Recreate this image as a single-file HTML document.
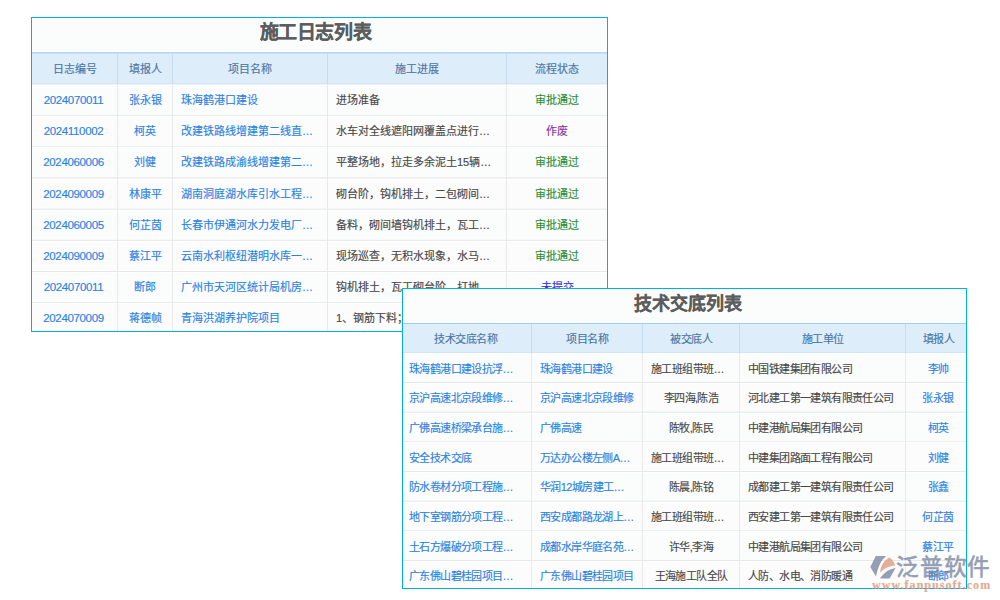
<!DOCTYPE html>
<html lang="zh-CN"><head><meta charset="utf-8"><style>
html,body{margin:0;padding:0;background:#ffffff;width:1000px;height:600px;overflow:hidden;position:relative}
body{font-family:"Liberation Sans",sans-serif}
.b{position:absolute}
.t{position:absolute;white-space:nowrap;box-sizing:border-box;text-align:center;-webkit-text-stroke:0.15px currentColor}
</style></head><body>
<div style="position:absolute;left:0;top:0;width:1000px;height:600px;z-index:1"><div class="b" style="left:31px;top:17px;width:577px;height:315px;background:#00aeef"></div><div class="b" style="left:32px;top:18px;width:575px;height:313px;background:#fbfcfc"></div><div class="t" style="left:28px;top:16.2px;width:575px;height:33px;line-height:33px;color:#5c5c5c;font-size:19px;font-weight:bold;letter-spacing:-0.4px;-webkit-text-stroke:0.15px #5c5c5c;">施工日志列表</div><div class="b" style="left:32px;top:51px;width:575px;height:1px;background:#ffffff"></div><div class="b" style="left:32px;top:52px;width:575px;height:1px;background:#b6d7f1"></div><div class="b" style="left:32px;top:53px;width:575px;height:1px;background:#c4e0f5"></div><div class="b" style="left:32px;top:54px;width:575px;height:29px;background:#deedfa"></div><div class="b" style="left:32px;top:83px;width:575px;height:1px;background:#d3e5f4"></div><div class="b" style="left:32px;top:84px;width:575px;height:1px;background:#eef3f6"></div><div class="b" style="left:32px;top:85px;width:575px;height:1px;background:rgba(255,255,255,0.8)"></div><div class="b" style="left:32px;top:116px;width:575px;height:30px;background:#fcfcfc"></div><div class="b" style="left:32px;top:115px;width:575px;height:1px;background:rgba(200,200,200,0.332)"></div><div class="b" style="left:32px;top:116px;width:575px;height:1px;background:rgba(200,200,200,0.068)"></div><div class="b" style="left:32px;top:116px;width:575px;height:1px;background:rgba(255,255,255,0.8)"></div><div class="b" style="left:32px;top:146px;width:575px;height:1px;background:rgba(200,200,200,0.264)"></div><div class="b" style="left:32px;top:147px;width:575px;height:1px;background:rgba(200,200,200,0.136)"></div><div class="b" style="left:32px;top:147px;width:575px;height:1px;background:rgba(255,255,255,0.8)"></div><div class="b" style="left:32px;top:178px;width:575px;height:30px;background:#fcfcfc"></div><div class="b" style="left:32px;top:177px;width:575px;height:1px;background:rgba(200,200,200,0.196)"></div><div class="b" style="left:32px;top:178px;width:575px;height:1px;background:rgba(200,200,200,0.204)"></div><div class="b" style="left:32px;top:179px;width:575px;height:1px;background:rgba(255,255,255,0.8)"></div><div class="b" style="left:32px;top:208px;width:575px;height:1px;background:rgba(200,200,200,0.128)"></div><div class="b" style="left:32px;top:209px;width:575px;height:1px;background:rgba(200,200,200,0.272)"></div><div class="b" style="left:32px;top:210px;width:575px;height:1px;background:rgba(255,255,255,0.8)"></div><div class="b" style="left:32px;top:240px;width:575px;height:31px;background:#fcfcfc"></div><div class="b" style="left:32px;top:239px;width:575px;height:1px;background:rgba(200,200,200,0.060)"></div><div class="b" style="left:32px;top:240px;width:575px;height:1px;background:rgba(200,200,200,0.340)"></div><div class="b" style="left:32px;top:241px;width:575px;height:1px;background:rgba(255,255,255,0.8)"></div><div class="b" style="left:32px;top:271px;width:575px;height:1px;background:rgba(200,200,200,0.392)"></div><div class="b" style="left:32px;top:272px;width:575px;height:1px;background:rgba(255,255,255,0.8)"></div><div class="b" style="left:32px;top:303px;width:575px;height:28px;background:#fcfcfc"></div><div class="b" style="left:32px;top:302px;width:575px;height:1px;background:rgba(200,200,200,0.324)"></div><div class="b" style="left:32px;top:303px;width:575px;height:1px;background:rgba(200,200,200,0.076)"></div><div class="b" style="left:32px;top:303px;width:575px;height:1px;background:rgba(255,255,255,0.8)"></div><div class="b" style="left:117px;top:54px;width:1px;height:30px;background:#c8dcef"></div><div class="b" style="left:117px;top:84px;width:1px;height:247px;background:#e9e9e9"></div><div class="b" style="left:172px;top:54px;width:1px;height:30px;background:#c8dcef"></div><div class="b" style="left:172px;top:84px;width:1px;height:247px;background:#e9e9e9"></div><div class="b" style="left:327px;top:54px;width:1px;height:30px;background:#c8dcef"></div><div class="b" style="left:327px;top:84px;width:1px;height:247px;background:#e9e9e9"></div><div class="b" style="left:506px;top:54px;width:1px;height:30px;background:#c8dcef"></div><div class="b" style="left:506px;top:84px;width:1px;height:247px;background:#e9e9e9"></div><div class="t" style="left:32px;top:54.5px;width:85px;height:29px;line-height:29px;color:#4a76a6;font-size:11px;">日志编号</div><div class="t" style="left:118px;top:54.5px;width:54px;height:29px;line-height:29px;color:#4a76a6;font-size:11px;">填报人</div><div class="t" style="left:173px;top:54.5px;width:154px;height:29px;line-height:29px;color:#4a76a6;font-size:11px;">项目名称</div><div class="t" style="left:328px;top:54.5px;width:178px;height:29px;line-height:29px;color:#4a76a6;font-size:11px;">施工进展</div><div class="t" style="left:507px;top:54.5px;width:100px;height:29px;line-height:29px;color:#4a76a6;font-size:11px;">流程状态</div><div class="t" style="left:31px;top:85.0px;width:85px;height:31.17px;line-height:31.17px;color:#2a82e4;font-size:11.5px;letter-spacing:-0.35px;">2024070011</div><div class="t" style="left:118px;top:85.0px;width:54px;height:31.17px;line-height:31.17px;color:#2a82e4;font-size:11px;">张永银</div><div class="t" style="left:173px;top:85.0px;width:154px;height:31.17px;line-height:31.17px;color:#2a82e4;font-size:11px;text-align:left;padding-left:8px;">珠海鹤港口建设</div><div class="t" style="left:328px;top:85.0px;width:178px;height:31.17px;line-height:31.17px;color:#484848;font-size:11px;text-align:left;padding-left:8px;">进场准备</div><div class="t" style="left:507px;top:85.0px;width:100px;height:31.17px;line-height:31.17px;color:#2b8c30;font-size:11px;">审批通过</div><div class="t" style="left:31px;top:116.17px;width:85px;height:31.17px;line-height:31.17px;color:#2a82e4;font-size:11.5px;letter-spacing:-0.35px;">2024110002</div><div class="t" style="left:118px;top:116.17px;width:54px;height:31.17px;line-height:31.17px;color:#2a82e4;font-size:11px;">柯英</div><div class="t" style="left:173px;top:116.17px;width:154px;height:31.17px;line-height:31.17px;color:#2a82e4;font-size:11px;text-align:left;padding-left:8px;">改建铁路线增建第二线直…</div><div class="t" style="left:328px;top:116.17px;width:178px;height:31.17px;line-height:31.17px;color:#484848;font-size:11px;text-align:left;padding-left:8px;">水车对全线遮阳网覆盖点进行…</div><div class="t" style="left:507px;top:116.17px;width:100px;height:31.17px;line-height:31.17px;color:#8434a4;font-size:11px;">作废</div><div class="t" style="left:31px;top:147.34px;width:85px;height:31.17px;line-height:31.17px;color:#2a82e4;font-size:11.5px;letter-spacing:-0.35px;">2024060006</div><div class="t" style="left:118px;top:147.34px;width:54px;height:31.17px;line-height:31.17px;color:#2a82e4;font-size:11px;">刘健</div><div class="t" style="left:173px;top:147.34px;width:154px;height:31.17px;line-height:31.17px;color:#2a82e4;font-size:11px;text-align:left;padding-left:8px;">改建铁路成渝线增建第二…</div><div class="t" style="left:328px;top:147.34px;width:178px;height:31.17px;line-height:31.17px;color:#484848;font-size:11px;text-align:left;padding-left:8px;">平整场地，拉走多余泥土15辆…</div><div class="t" style="left:507px;top:147.34px;width:100px;height:31.17px;line-height:31.17px;color:#2b8c30;font-size:11px;">审批通过</div><div class="t" style="left:31px;top:178.51px;width:85px;height:31.17px;line-height:31.17px;color:#2a82e4;font-size:11.5px;letter-spacing:-0.35px;">2024090009</div><div class="t" style="left:118px;top:178.51px;width:54px;height:31.17px;line-height:31.17px;color:#2a82e4;font-size:11px;">林康平</div><div class="t" style="left:173px;top:178.51px;width:154px;height:31.17px;line-height:31.17px;color:#2a82e4;font-size:11px;text-align:left;padding-left:8px;">湖南洞庭湖水库引水工程…</div><div class="t" style="left:328px;top:178.51px;width:178px;height:31.17px;line-height:31.17px;color:#484848;font-size:11px;text-align:left;padding-left:8px;">砌台阶，钩机排土，二包砌间…</div><div class="t" style="left:507px;top:178.51px;width:100px;height:31.17px;line-height:31.17px;color:#2b8c30;font-size:11px;">审批通过</div><div class="t" style="left:31px;top:209.68px;width:85px;height:31.17px;line-height:31.17px;color:#2a82e4;font-size:11.5px;letter-spacing:-0.35px;">2024060005</div><div class="t" style="left:118px;top:209.68px;width:54px;height:31.17px;line-height:31.17px;color:#2a82e4;font-size:11px;">何芷茵</div><div class="t" style="left:173px;top:209.68px;width:154px;height:31.17px;line-height:31.17px;color:#2a82e4;font-size:11px;text-align:left;padding-left:8px;">长春市伊通河水力发电厂…</div><div class="t" style="left:328px;top:209.68px;width:178px;height:31.17px;line-height:31.17px;color:#484848;font-size:11px;text-align:left;padding-left:8px;">备料，砌间墙钩机排土，瓦工…</div><div class="t" style="left:507px;top:209.68px;width:100px;height:31.17px;line-height:31.17px;color:#2b8c30;font-size:11px;">审批通过</div><div class="t" style="left:31px;top:240.85px;width:85px;height:31.17px;line-height:31.17px;color:#2a82e4;font-size:11.5px;letter-spacing:-0.35px;">2024090009</div><div class="t" style="left:118px;top:240.85px;width:54px;height:31.17px;line-height:31.17px;color:#2a82e4;font-size:11px;">蔡江平</div><div class="t" style="left:173px;top:240.85px;width:154px;height:31.17px;line-height:31.17px;color:#2a82e4;font-size:11px;text-align:left;padding-left:8px;">云南水利枢纽潜明水库一…</div><div class="t" style="left:328px;top:240.85px;width:178px;height:31.17px;line-height:31.17px;color:#484848;font-size:11px;text-align:left;padding-left:8px;">现场巡查，无积水现象，水马…</div><div class="t" style="left:507px;top:240.85px;width:100px;height:31.17px;line-height:31.17px;color:#2b8c30;font-size:11px;">审批通过</div><div class="t" style="left:31px;top:272.02px;width:85px;height:31.17px;line-height:31.17px;color:#2a82e4;font-size:11.5px;letter-spacing:-0.35px;">2024070011</div><div class="t" style="left:118px;top:272.02px;width:54px;height:31.17px;line-height:31.17px;color:#2a82e4;font-size:11px;">断郎</div><div class="t" style="left:173px;top:272.02px;width:154px;height:31.17px;line-height:31.17px;color:#2a82e4;font-size:11px;text-align:left;padding-left:8px;">广州市天河区统计局机房…</div><div class="t" style="left:328px;top:272.02px;width:178px;height:31.17px;line-height:31.17px;color:#484848;font-size:11px;text-align:left;padding-left:8px;">钩机排土，瓦工砌台阶，打地…</div><div class="t" style="left:507px;top:272.02px;width:100px;height:31.17px;line-height:31.17px;color:#2e2ee8;font-size:11px;">未提交</div><div class="t" style="left:31px;top:303.19px;width:85px;height:31.17px;line-height:31.17px;color:#2a82e4;font-size:11.5px;letter-spacing:-0.35px;">2024070009</div><div class="t" style="left:118px;top:303.19px;width:54px;height:31.17px;line-height:31.17px;color:#2a82e4;font-size:11px;">蒋德帧</div><div class="t" style="left:173px;top:303.19px;width:154px;height:31.17px;line-height:31.17px;color:#2a82e4;font-size:11px;text-align:left;padding-left:8px;">青海洪湖养护院项目</div><div class="t" style="left:328px;top:303.19px;width:178px;height:31.17px;line-height:31.17px;color:#484848;font-size:11px;text-align:left;padding-left:8px;">1、钢筋下料；…</div></div><div style="position:absolute;left:0;top:0;width:1000px;height:600px;z-index:2"><div class="b" style="left:402px;top:288px;width:565px;height:301px;background:#00aeef"></div><div class="b" style="left:403px;top:289px;width:563px;height:299px;background:#fbfcfc"></div><div class="t" style="left:406px;top:288.3px;width:563px;height:33px;line-height:33px;color:#5c5c5c;font-size:18px;font-weight:bold;-webkit-text-stroke:0.15px #5c5c5c;">技术交底列表</div><div class="b" style="left:403px;top:322px;width:563px;height:1px;background:#ffffff"></div><div class="b" style="left:403px;top:323px;width:563px;height:1px;background:#a3cdee"></div><div class="b" style="left:403px;top:324px;width:563px;height:28px;background:#deedfa"></div><div class="b" style="left:403px;top:352px;width:563px;height:1px;background:#d3e5f4"></div><div class="b" style="left:403px;top:353px;width:563px;height:1px;background:#eef3f6"></div><div class="b" style="left:403px;top:353px;width:563px;height:1px;background:rgba(255,255,255,0.8)"></div><div class="b" style="left:403px;top:383px;width:563px;height:28px;background:#fcfcfc"></div><div class="b" style="left:403px;top:382px;width:563px;height:1px;background:rgba(200,200,200,0.400)"></div><div class="b" style="left:403px;top:383px;width:563px;height:1px;background:rgba(255,255,255,0.8)"></div><div class="b" style="left:403px;top:411px;width:563px;height:1px;background:rgba(200,200,200,0.132)"></div><div class="b" style="left:403px;top:412px;width:563px;height:1px;background:rgba(200,200,200,0.268)"></div><div class="b" style="left:403px;top:413px;width:563px;height:1px;background:rgba(255,255,255,0.8)"></div><div class="b" style="left:403px;top:442px;width:563px;height:29px;background:#fcfcfc"></div><div class="b" style="left:403px;top:441px;width:563px;height:1px;background:rgba(200,200,200,0.264)"></div><div class="b" style="left:403px;top:442px;width:563px;height:1px;background:rgba(200,200,200,0.136)"></div><div class="b" style="left:403px;top:442px;width:563px;height:1px;background:rgba(255,255,255,0.8)"></div><div class="b" style="left:403px;top:471px;width:563px;height:1px;background:rgba(200,200,200,0.396)"></div><div class="b" style="left:403px;top:472px;width:563px;height:1px;background:rgba(255,255,255,0.8)"></div><div class="b" style="left:403px;top:501px;width:563px;height:29px;background:#fcfcfc"></div><div class="b" style="left:403px;top:500px;width:563px;height:1px;background:rgba(200,200,200,0.128)"></div><div class="b" style="left:403px;top:501px;width:563px;height:1px;background:rgba(200,200,200,0.272)"></div><div class="b" style="left:403px;top:502px;width:563px;height:1px;background:rgba(255,255,255,0.8)"></div><div class="b" style="left:403px;top:530px;width:563px;height:1px;background:rgba(200,200,200,0.260)"></div><div class="b" style="left:403px;top:531px;width:563px;height:1px;background:rgba(200,200,200,0.140)"></div><div class="b" style="left:403px;top:531px;width:563px;height:1px;background:rgba(255,255,255,0.8)"></div><div class="b" style="left:403px;top:561px;width:563px;height:27px;background:#fcfcfc"></div><div class="b" style="left:403px;top:560px;width:563px;height:1px;background:rgba(200,200,200,0.392)"></div><div class="b" style="left:403px;top:561px;width:563px;height:1px;background:rgba(255,255,255,0.8)"></div><div class="b" style="left:531px;top:324px;width:1px;height:29px;background:#c8dcef"></div><div class="b" style="left:531px;top:353px;width:1px;height:235px;background:#e9e9e9"></div><div class="b" style="left:642px;top:324px;width:1px;height:29px;background:#c8dcef"></div><div class="b" style="left:642px;top:353px;width:1px;height:235px;background:#e9e9e9"></div><div class="b" style="left:739px;top:324px;width:1px;height:29px;background:#c8dcef"></div><div class="b" style="left:739px;top:353px;width:1px;height:235px;background:#e9e9e9"></div><div class="b" style="left:905px;top:324px;width:1px;height:29px;background:#c8dcef"></div><div class="b" style="left:905px;top:353px;width:1px;height:235px;background:#e9e9e9"></div><div class="t" style="left:401.5px;top:325px;width:128px;height:28px;line-height:28px;color:#4a76a6;font-size:11px;letter-spacing:-0.5px;">技术交底名称</div><div class="t" style="left:532px;top:325px;width:110px;height:28px;line-height:28px;color:#4a76a6;font-size:11px;letter-spacing:-0.5px;">项目名称</div><div class="t" style="left:643px;top:325px;width:96px;height:28px;line-height:28px;color:#4a76a6;font-size:11px;letter-spacing:-0.5px;">被交底人</div><div class="t" style="left:740px;top:325px;width:165px;height:28px;line-height:28px;color:#4a76a6;font-size:11px;letter-spacing:-0.5px;">施工单位</div><div class="t" style="left:908.5px;top:325px;width:60px;height:28px;line-height:28px;color:#4a76a6;font-size:11px;letter-spacing:-0.5px;">填报人</div><div class="t" style="left:403px;top:354.53px;width:128px;height:29.67px;line-height:29.67px;color:#2a82e4;font-size:11px;text-align:left;padding-left:6px;letter-spacing:-0.6px;">珠海鹤港口建设抗浮…</div><div class="t" style="left:532px;top:354.53px;width:110px;height:29.67px;line-height:29.67px;color:#2a82e4;font-size:11px;text-align:left;padding-left:8px;letter-spacing:-0.6px;">珠海鹤港口建设</div><div class="t" style="left:643px;top:354.53px;width:96px;height:29.67px;line-height:29.67px;color:#484848;font-size:11px;text-align:left;padding-left:8px;letter-spacing:-0.6px;">施工班组带班…</div><div class="t" style="left:740px;top:354.53px;width:165px;height:29.67px;line-height:29.67px;color:#484848;font-size:11px;text-align:left;padding-left:8px;letter-spacing:-0.6px;">中国铁建集团有限公司</div><div class="t" style="left:908px;top:354.53px;width:60px;height:29.67px;line-height:29.67px;color:#2a82e4;font-size:11px;letter-spacing:-0.6px;">李帅</div><div class="t" style="left:403px;top:384.2px;width:128px;height:29.67px;line-height:29.67px;color:#2a82e4;font-size:11px;text-align:left;padding-left:6px;letter-spacing:-0.6px;">京沪高速北京段维修…</div><div class="t" style="left:532px;top:384.2px;width:110px;height:29.67px;line-height:29.67px;color:#2a82e4;font-size:11px;text-align:left;padding-left:8px;letter-spacing:-0.6px;">京沪高速北京段维修</div><div class="t" style="left:643px;top:384.2px;width:96px;height:29.67px;line-height:29.67px;color:#484848;font-size:11px;letter-spacing:-0.6px;">李四海,陈浩</div><div class="t" style="left:740px;top:384.2px;width:165px;height:29.67px;line-height:29.67px;color:#484848;font-size:11px;text-align:left;padding-left:8px;letter-spacing:-0.6px;">河北建工第一建筑有限责任公司</div><div class="t" style="left:908px;top:384.2px;width:60px;height:29.67px;line-height:29.67px;color:#2a82e4;font-size:11px;letter-spacing:-0.6px;">张永银</div><div class="t" style="left:403px;top:413.87px;width:128px;height:29.67px;line-height:29.67px;color:#2a82e4;font-size:11px;text-align:left;padding-left:6px;letter-spacing:-0.6px;">广佛高速桥梁承台施…</div><div class="t" style="left:532px;top:413.87px;width:110px;height:29.67px;line-height:29.67px;color:#2a82e4;font-size:11px;text-align:left;padding-left:8px;letter-spacing:-0.6px;">广佛高速</div><div class="t" style="left:643px;top:413.87px;width:96px;height:29.67px;line-height:29.67px;color:#484848;font-size:11px;letter-spacing:-0.6px;">陈牧,陈民</div><div class="t" style="left:740px;top:413.87px;width:165px;height:29.67px;line-height:29.67px;color:#484848;font-size:11px;text-align:left;padding-left:8px;letter-spacing:-0.6px;">中建港航局集团有限公司</div><div class="t" style="left:908px;top:413.87px;width:60px;height:29.67px;line-height:29.67px;color:#2a82e4;font-size:11px;letter-spacing:-0.6px;">柯英</div><div class="t" style="left:403px;top:443.54px;width:128px;height:29.67px;line-height:29.67px;color:#2a82e4;font-size:11px;text-align:left;padding-left:6px;letter-spacing:-0.6px;">安全技术交底</div><div class="t" style="left:532px;top:443.54px;width:110px;height:29.67px;line-height:29.67px;color:#2a82e4;font-size:11px;text-align:left;padding-left:8px;letter-spacing:-0.6px;">万达办公楼左侧A…</div><div class="t" style="left:643px;top:443.54px;width:96px;height:29.67px;line-height:29.67px;color:#484848;font-size:11px;text-align:left;padding-left:8px;letter-spacing:-0.6px;">施工班组带班…</div><div class="t" style="left:740px;top:443.54px;width:165px;height:29.67px;line-height:29.67px;color:#484848;font-size:11px;text-align:left;padding-left:8px;letter-spacing:-0.6px;">中建集团路面工程有限公司</div><div class="t" style="left:908px;top:443.54px;width:60px;height:29.67px;line-height:29.67px;color:#2a82e4;font-size:11px;letter-spacing:-0.6px;">刘健</div><div class="t" style="left:403px;top:473.21px;width:128px;height:29.67px;line-height:29.67px;color:#2a82e4;font-size:11px;text-align:left;padding-left:6px;letter-spacing:-0.6px;">防水卷材分项工程施…</div><div class="t" style="left:532px;top:473.21px;width:110px;height:29.67px;line-height:29.67px;color:#2a82e4;font-size:11px;text-align:left;padding-left:8px;letter-spacing:-0.6px;">华润12城房建工…</div><div class="t" style="left:643px;top:473.21px;width:96px;height:29.67px;line-height:29.67px;color:#484848;font-size:11px;letter-spacing:-0.6px;">陈晨,陈铭</div><div class="t" style="left:740px;top:473.21px;width:165px;height:29.67px;line-height:29.67px;color:#484848;font-size:11px;text-align:left;padding-left:8px;letter-spacing:-0.6px;">成都建工第一建筑有限责任公司</div><div class="t" style="left:908px;top:473.21px;width:60px;height:29.67px;line-height:29.67px;color:#2a82e4;font-size:11px;letter-spacing:-0.6px;">张鑫</div><div class="t" style="left:403px;top:502.88px;width:128px;height:29.67px;line-height:29.67px;color:#2a82e4;font-size:11px;text-align:left;padding-left:6px;letter-spacing:-0.6px;">地下室钢筋分项工程…</div><div class="t" style="left:532px;top:502.88px;width:110px;height:29.67px;line-height:29.67px;color:#2a82e4;font-size:11px;text-align:left;padding-left:8px;letter-spacing:-0.6px;">西安成都路龙湖上…</div><div class="t" style="left:643px;top:502.88px;width:96px;height:29.67px;line-height:29.67px;color:#484848;font-size:11px;text-align:left;padding-left:8px;letter-spacing:-0.6px;">施工班组带班…</div><div class="t" style="left:740px;top:502.88px;width:165px;height:29.67px;line-height:29.67px;color:#484848;font-size:11px;text-align:left;padding-left:8px;letter-spacing:-0.6px;">西安建工第一建筑有限责任公司</div><div class="t" style="left:908px;top:502.88px;width:60px;height:29.67px;line-height:29.67px;color:#2a82e4;font-size:11px;letter-spacing:-0.6px;">何芷茵</div><div class="t" style="left:403px;top:532.55px;width:128px;height:29.67px;line-height:29.67px;color:#2a82e4;font-size:11px;text-align:left;padding-left:6px;letter-spacing:-0.6px;">土石方爆破分项工程…</div><div class="t" style="left:532px;top:532.55px;width:110px;height:29.67px;line-height:29.67px;color:#2a82e4;font-size:11px;text-align:left;padding-left:8px;letter-spacing:-0.6px;">成都水岸华庭名苑…</div><div class="t" style="left:643px;top:532.55px;width:96px;height:29.67px;line-height:29.67px;color:#484848;font-size:11px;letter-spacing:-0.6px;">许华,李海</div><div class="t" style="left:740px;top:532.55px;width:165px;height:29.67px;line-height:29.67px;color:#484848;font-size:11px;text-align:left;padding-left:8px;letter-spacing:-0.6px;">中建港航局集团有限公司</div><div class="t" style="left:908px;top:532.55px;width:60px;height:29.67px;line-height:29.67px;color:#2a82e4;font-size:11px;letter-spacing:-0.6px;">蔡江平</div><div class="t" style="left:403px;top:562.22px;width:128px;height:29.67px;line-height:29.67px;color:#2a82e4;font-size:11px;text-align:left;padding-left:6px;letter-spacing:-0.6px;">广东佛山碧桂园项目…</div><div class="t" style="left:532px;top:562.22px;width:110px;height:29.67px;line-height:29.67px;color:#2a82e4;font-size:11px;text-align:left;padding-left:8px;letter-spacing:-0.6px;">广东佛山碧桂园项目</div><div class="t" style="left:643px;top:562.22px;width:96px;height:29.67px;line-height:29.67px;color:#484848;font-size:11px;letter-spacing:-0.6px;">王海施工队全队</div><div class="t" style="left:740px;top:562.22px;width:165px;height:29.67px;line-height:29.67px;color:#484848;font-size:11px;text-align:left;padding-left:8px;letter-spacing:-0.6px;">人防、水电、消防暖通</div><div class="t" style="left:908px;top:562.22px;width:60px;height:29.67px;line-height:29.67px;color:#2a82e4;font-size:11px;letter-spacing:-0.6px;">断郎</div></div>
<div style="position:absolute;left:866px;top:550px;width:134px;height:50px;z-index:5;opacity:0.8">
<svg width="134" height="50" viewBox="0 0 134 50" style="position:absolute;left:0;top:0">
<g transform="translate(0,2)">
<path d="M4.3,15 L9.8,4 L20.2,4 C15,8 12,15 10,24.5 Z" fill="#7c89a3"/>
<path d="M23.5,5.5 C26.5,7.5 28.5,10.5 29.2,13.6 C23,14 17.5,17 14.3,20.8 C14.2,14 18,8.5 23.5,5.5 Z" fill="#e09a7e"/>
<path d="M29.6,16 L23.6,26.6 L14,26.6 C17.5,21 23,17 29.6,16 Z" fill="#7c89a3"/>
</g>
</svg>
<div class="t" style="left:30px;top:5px;width:110px;height:26px;line-height:26px;font-size:22.5px;font-weight:normal;text-align:left;color:#7b87a1;letter-spacing:0.8px;-webkit-text-stroke:0.6px #7b87a1">泛普软件</div>
<div class="t" style="left:6px;top:28.5px;width:130px;height:12px;line-height:12px;font-size:12px;font-weight:bold;text-align:left;color:#dc9878;font-family:'Liberation Serif',serif;letter-spacing:1.05px;-webkit-text-stroke:0.2px #dc9878">www.fanpusoft.com</div>
</div>
</body></html>
